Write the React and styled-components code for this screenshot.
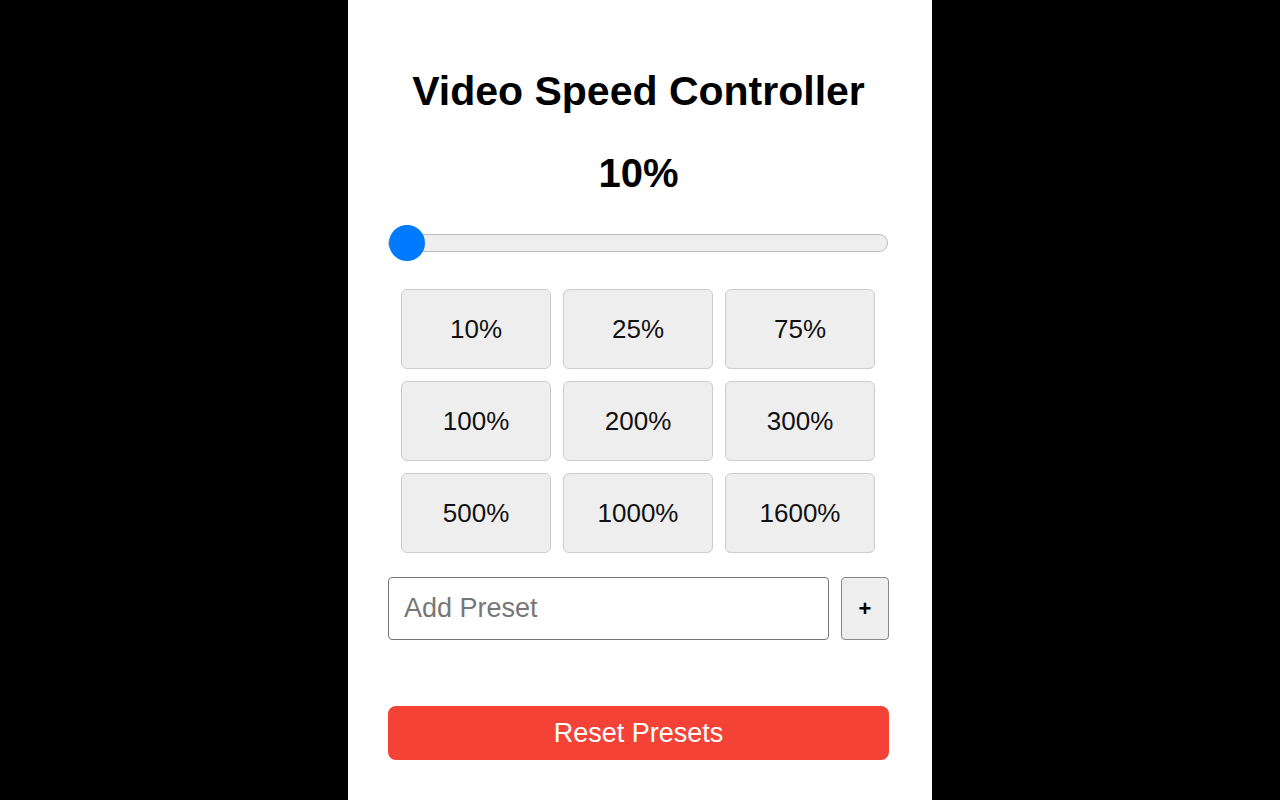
import React, { useState } from "react";
import styled, { createGlobalStyle } from "styled-components";

const GlobalStyle = createGlobalStyle`
  html, body {
    margin: 0;
    padding: 0;
    background: #000;
    font-family: "Liberation Sans", Arial, sans-serif;
  }
`;

const Page = styled.div`
  min-height: 800px;
  display: flex;
  justify-content: center;
  background: #000;
`;

const Panel = styled.div`
  width: 584px;
  box-sizing: border-box;
  background: #fff;
  padding: 68px 43px 40px 40px;
  display: flex;
  flex-direction: column;
`;

const Title = styled.h1`
  margin: 0;
  font-size: 41px;
  font-weight: bold;
  text-align: center;
  color: #000;
  line-height: 46px;
`;

const SpeedLabel = styled.div`
  margin-top: 36px;
  font-size: 40px;
  font-weight: bold;
  text-align: center;
  color: #000;
  line-height: 46px;
`;

const Slider = styled.input`
  -webkit-appearance: none;
  appearance: none;
  margin: 29px 0 0 0;
  width: 500px;
  height: 36px;
  background: transparent;
  outline: none;

  &::-webkit-slider-runnable-track {
    height: 18px;
    background: #eee;
    border: 1px solid #bbb;
    border-radius: 9px;
    box-sizing: border-box;
  }

  &::-webkit-slider-thumb {
    -webkit-appearance: none;
    width: 36px;
    height: 36px;
    border-radius: 50%;
    background: #007bff;
    border: none;
    margin-top: -10px;
    cursor: pointer;
  }
`;

const PresetGrid = styled.div`
  margin: 28px 14px 0 13px;
  display: grid;
  grid-template-columns: repeat(3, 150px);
  grid-auto-rows: 80px;
  column-gap: 12px;
  row-gap: 12px;
`;

const PresetButton = styled.button`
  background: #eee;
  border: 1px solid #ccc;
  border-radius: 6px;
  font-family: "Liberation Sans", Arial, sans-serif;
  font-size: 26px;
  color: #111;
  cursor: pointer;
`;

const AddRow = styled.div`
  margin-top: 24px;
  display: flex;
  gap: 12px;
  height: 63px;
`;

const PresetInput = styled.input`
  flex: 1;
  box-sizing: border-box;
  border: 1px solid #767676;
  border-radius: 4px;
  padding: 0 15px;
  font-family: "Liberation Sans", Arial, sans-serif;
  font-size: 27px;
  color: #000;
  outline: none;

  &::placeholder {
    color: #777;
  }
`;

const AddButton = styled.button`
  width: 48px;
  background: #eee;
  border: 1px solid #888;
  border-radius: 4px;
  font-family: "Liberation Sans", Arial, sans-serif;
  font-size: 22px;
  font-weight: bold;
  color: #000;
  cursor: pointer;
`;

const ResetButton = styled.button`
  margin-top: 66px;
  height: 54px;
  background: #f44336;
  border: none;
  border-radius: 8px;
  color: #fff;
  font-family: "Liberation Sans", Arial, sans-serif;
  font-size: 27px;
  cursor: pointer;
`;

const presets = [10, 25, 75, 100, 200, 300, 500, 1000, 1600];

function App() {
  const [speed, setSpeed] = useState(10);

  return (
    <Page>
      <GlobalStyle />
      <Panel>
        <Title>Video Speed Controller</Title>
        <SpeedLabel>{speed}%</SpeedLabel>
        <Slider
          type="range"
          min={10}
          max={1600}
          value={speed}
          onChange={(e) => setSpeed(Number(e.target.value))}
        />
        <PresetGrid>
          {presets.map((p) => (
            <PresetButton key={p} onClick={() => setSpeed(p)}>
              {p}%
            </PresetButton>
          ))}
        </PresetGrid>
        <AddRow>
          <PresetInput placeholder="Add Preset" />
          <AddButton>+</AddButton>
        </AddRow>
        <ResetButton>Reset Presets</ResetButton>
      </Panel>
    </Page>
  );
}

export default App;
